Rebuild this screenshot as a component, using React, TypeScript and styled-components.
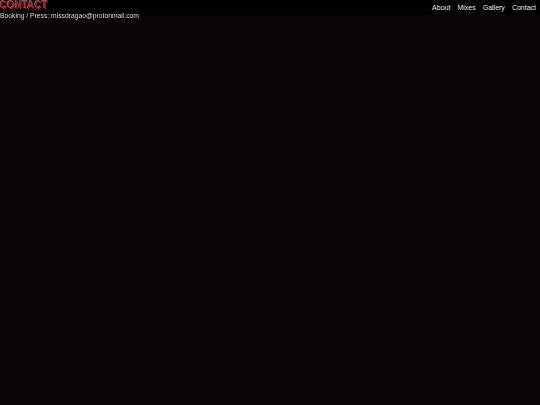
import styled, { createGlobalStyle } from 'styled-components'

const GlobalStyle = createGlobalStyle`
  html, body {
    margin: 0;
    padding: 0;
    background: #080404;
    min-height: 100%;
  }
  body {
    font-family: 'Liberation Sans', Arial, sans-serif;
    color: #dcdcdc;
  }
`

const links = ['About', 'Mixes', 'Gallery', 'Contact']

const App = () => {
  return (
    <>
      <GlobalStyle />
      <Header>
        <Nav>
          {links.map((label) => (
            <NavLink key={label} href="#">
              {label}
            </NavLink>
          ))}
        </Nav>
      </Header>
      <Main>
        <Title>CONTACT</Title>
        <Line>Booking / Press: missdragao@protonmail.com</Line>
      </Main>
    </>
  )
}

const Header = styled.header`
  position: fixed;
  top: 0;
  left: 0;
  right: 0;
  height: 15px;
  background: #000;
  display: flex;
  justify-content: flex-end;
  align-items: center;
  z-index: 0;
`

const Nav = styled.nav`
  display: flex;
  align-items: center;
  gap: 7px;
  padding-right: 4px;
`

const NavLink = styled.a`
  color: #e6e6e6;
  text-decoration: none;
  font-size: 7px;
  line-height: 15px;
`

const Main = styled.main`
  position: relative;
  z-index: 1;
  display: flex;
  flex-direction: column;
`

const Title = styled.h1`
  margin: 0;
  font-size: 10px;
  line-height: 11px;
  font-weight: 700;
  color: #b8101c;
  text-shadow: -1px -1px 0 rgba(255, 255, 255, 0.4);
`

const Line = styled.p`
  margin: 0;
  font-size: 6.75px;
  line-height: 9px;
  color: #d8d8d8;
`

export default App
